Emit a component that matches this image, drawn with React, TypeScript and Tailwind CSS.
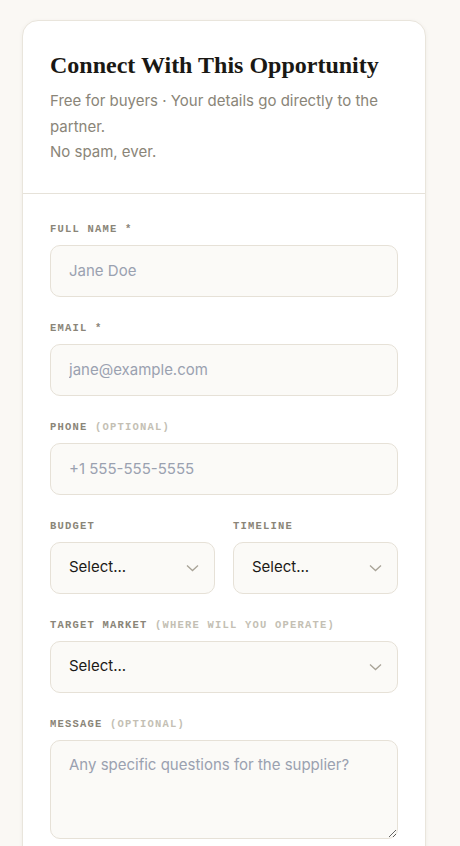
import React from "react";

const sans = { fontFamily: "Inter, 'Noto Sans', sans-serif" };

const Label = ({ main, extra }: { main: string; extra?: string }) => (
  <label className="block mb-[8px] font-['Liberation_Mono',monospace] text-[10.5px] leading-[16px] font-bold tracking-[1.2px] text-[#8a8578] uppercase">
    {main}
    {extra && <span className="text-[#c4bfb4]"> {extra}</span>}
  </label>
);

const Chevron = () => (
  <svg
    width="13"
    height="8"
    viewBox="0 0 13 8"
    fill="none"
    className="absolute right-[16px] top-1/2 -translate-y-1/2 pointer-events-none"
  >
    <path d="M1 1.5 6.5 6.5 12 1.5" stroke="#a8a397" strokeWidth="1.3" />
  </svg>
);

const inputCls =
  "w-full h-[52px] rounded-[10px] border border-[#e6e1d7] bg-[#fbfaf7] px-[18px] text-[15px] text-[#1c1a17] placeholder:text-[#9aa1b0] outline-none";

const SelectBox = () => (
  <div className="relative">
    <select
      className={inputCls + " appearance-none cursor-pointer"}
      style={sans}
      defaultValue=""
    >
      <option value="">Select...</option>
    </select>
    <Chevron />
  </div>
);

export default function App() {
  return (
    <div className="min-h-screen bg-[#faf8f4] pt-[20px] pl-[22px] pr-[34px]">
      <div className="w-[404px] rounded-[16px] border border-[#e9e5dc] bg-white shadow-[0_1px_4px_rgba(60,50,30,0.06)]">
        <div className="px-[27px] pt-[28px] pb-[28px] border-b border-[#e6e2d9]">
          <h2 className="font-['Liberation_Serif',serif] text-[24px] leading-[32px] font-bold text-[#1a1814]">
            Connect With This Opportunity
          </h2>
          <p
            className="mt-[7px] text-[15px] leading-[25.5px] text-[#8a8578]"
            style={sans}
          >
            Free for buyers · Your details go directly to the partner.
            <br />
            No spam, ever.
          </p>
        </div>

        <form className="px-[27px] pt-[27px] pb-[28px] flex flex-col gap-[23px]" style={sans}>
          <div>
            <Label main="Full Name *" />
            <input className={inputCls} placeholder="Jane Doe" style={sans} />
          </div>
          <div>
            <Label main="Email *" />
            <input className={inputCls} placeholder="jane@example.com" style={sans} />
          </div>
          <div>
            <Label main="Phone" extra="(optional)" />
            <input className={inputCls} placeholder="+1 555-555-5555" style={sans} />
          </div>
          <div className="grid grid-cols-2 gap-[18px]">
            <div>
              <Label main="Budget" />
              <SelectBox />
            </div>
            <div>
              <Label main="Timeline" />
              <SelectBox />
            </div>
          </div>
          <div>
            <Label main="Target Market" extra="(where will you operate)" />
            <SelectBox />
          </div>
          <div>
            <Label main="Message" extra="(optional)" />
            <textarea
              className="block w-full h-[99px] rounded-[10px] border border-[#e6e1d7] bg-[#fbfaf7] px-[18px] py-[13px] text-[15px] leading-[22px] text-[#1c1a17] placeholder:text-[#9aa1b0] outline-none resize-y"
              placeholder="Any specific questions for the supplier?"
              style={sans}
            />
          </div>
        </form>
      </div>
    </div>
  );
}
